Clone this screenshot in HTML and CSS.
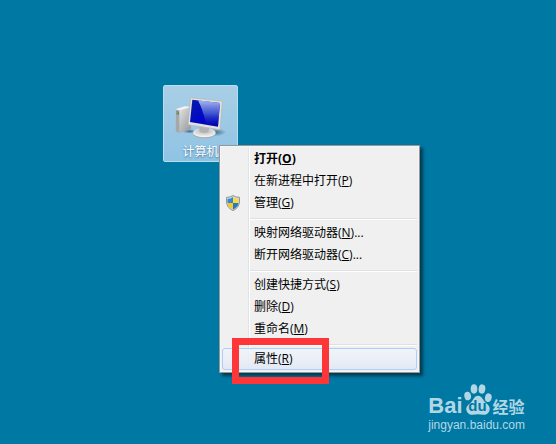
FILE: index.html
```html
<!DOCTYPE html>
<html lang="zh-CN">
<head>
    <meta charset="UTF-8">
    <meta name="viewport" content="width=device-width, initial-scale=1.0">
    <title>计算机</title>
    <link rel="stylesheet" href="styles.css">
</head>
<body>
    <main class="desktop">
        <button class="shortcut" type="button">
            <svg class="shortcut-icon" viewBox="2 0 180 150" aria-hidden="true">
                <defs>
                    <linearGradient id="screen" x1="0" y1="0" x2="1" y2="1">
                        <stop offset="0" stop-color="#0a1fa0"/>
                        <stop offset=".5" stop-color="#0008c8"/>
                        <stop offset="1" stop-color="#0000a8"/>
                    </linearGradient>
                    <linearGradient id="shine" x1="0" y1="0" x2="0" y2="1">
                        <stop offset="0" stop-color="#a8b8f0"/>
                        <stop offset=".5" stop-color="#5068d4" stop-opacity=".8"/>
                        <stop offset="1" stop-color="#1020c0" stop-opacity="0"/>
                    </linearGradient>
                    <linearGradient id="tower" x1="0" y1="0" x2="1" y2="1">
                        <stop offset="0" stop-color="#f0f0f0"/>
                        <stop offset="1" stop-color="#909498"/>
                    </linearGradient>
                    <radialGradient id="foot" cx=".5" cy=".3" r=".6">
                        <stop offset="0" stop-color="#b4b4b8"/>
                        <stop offset="1" stop-color="#f0f0f0"/>
                    </radialGradient>
                    <radialGradient id="shade">
                        <stop offset="0" stop-color="#34566c" stop-opacity=".8"/>
                        <stop offset="1" stop-color="#34566c" stop-opacity="0"/>
                    </radialGradient>
                </defs>
                <ellipse cx="134" cy="121" rx="34" ry="12" fill="url(#shade)"/>
                <ellipse cx="58" cy="118" rx="22" ry="7" fill="url(#shade)"/>
                <path d="M16 52 44 43 62 45V110L28 123 16 118Z" fill="url(#tower)"/>
                <path d="M16 52 27 55V123L16 118Z" fill="#a4a8ac"/>
                <path d="M19 58 25 60V68L19 66Z" fill="#54585c"/>
                <path d="M19 62 24 63" stroke="#7ee05c" stroke-width="3"/>
                <path d="M16 52 44 43 62 45 27 55Z" fill="#f4f4f4"/>
                <ellipse cx="102" cy="125" rx="34" ry="14" fill="#a4a8ac"/>
                <ellipse cx="102" cy="122" rx="34" ry="14" fill="url(#foot)"/>
                <path d="M86 98 118 102 114 121Q100 126 88 119Z" fill="#b0b2b4"/>
                <path d="M61 17 156 28 149 113 53 98Z" fill="#e4e2de" stroke="#b4b4b4" stroke-width="2"/>
                <path d="M66 23 149 33 143 104 59 90Z" fill="url(#screen)"/>
                <path d="M83 25 149 33 146 68 143 104 108 98Q98 55 83 25Z" fill="url(#shine)"/>
            </svg>
            <span class="shortcut-label">计算机</span>
        </button>

        <div class="menu" role="menu">
            <button class="item default" type="button" role="menuitem">打开(<u>O</u>)</button>
            <button class="item" type="button" role="menuitem">在新进程中打开(<u>P</u>)</button>
            <button class="item" type="button" role="menuitem">
                <svg class="shield" viewBox="0 0 16 16" aria-hidden="true">
                    <path d="M8 .5Q11 2.500 14.500 2.300V7Q14 13 8 15.600 2 13 1.500 7V2.300Q5 2.500 8 .5Z" fill="#d4d8da" stroke="#92989c"/>
                    <path d="M8 2V8H2.500V4Q6 4 8 2Z" fill="#2d8bd8"/>
                    <path d="M8 2Q10 4 13.500 4V8H8Z" fill="#ffd83c"/>
                    <path d="M2.500 8H8V14.500Q3 12 2.500 8Z" fill="#fcc820"/>
                    <path d="M8 8H13.500Q13 12 8 14.500Z" fill="#247cc8"/>
                </svg>
                管理(<u>G</u>)
            </button>
            <hr class="separator">
            <button class="item" type="button" role="menuitem">映射网络驱动器(<u>N</u>)...</button>
            <button class="item" type="button" role="menuitem">断开网络驱动器(<u>C</u>)...</button>
            <hr class="separator">
            <button class="item" type="button" role="menuitem">创建快捷方式(<u>S</u>)</button>
            <button class="item" type="button" role="menuitem">删除(<u>D</u>)</button>
            <button class="item" type="button" role="menuitem">重命名(<u>M</u>)</button>
            <hr class="separator">
            <button class="item active" type="button" role="menuitem">属性(<u>R</u>)</button>
        </div>

        <div class="marker"></div>

        <div class="watermark">
            <div class="brand">
                <span class="brand-bai">Bai</span>
                <span class="paw">
                    <svg class="paw-shape" viewBox="0 0 84 96" aria-hidden="true">
                        <ellipse cx="11" cy="36" rx="10" ry="13" transform="rotate(-12 11 36)"/>
                        <ellipse cx="30" cy="15" rx="10" ry="14"/>
                        <ellipse cx="54" cy="15" rx="10" ry="14" transform="rotate(8 54 15)"/>
                        <ellipse cx="73" cy="41" rx="10" ry="13" transform="rotate(12 73 41)"/>
                        <path d="M42 35C54 35 56 48 65 56C74 63 80 70 76 81C71 95 58 93 42 91C26 93 13 95 8 81C4 70 11 63 20 56C29 48 30 35 42 35Z"/>
                    </svg>
                    <span class="paw-text">du</span>
                </span>
                <span class="brand-name">经验</span>
            </div>
            <div class="site">jingyan.baidu.com</div>
        </div>
    </main>
</body>
</html>
```

FILE: styles.css
```css
*{
    margin: 0;
    padding: 0;
    box-sizing: border-box;
}
body{
    font-family: "Open Sans", "Noto Sans CJK SC", sans-serif;
    font-size: 12px;
    color: #000;
}
button{
    font: inherit;
    color: inherit;
    border: 1px solid transparent;
    background: none;
}
.desktop{
    position: relative;
    min-height: 100vh;
    overflow: hidden;
    background-color: #0078a4;
}

/* desktop shortcut */
.shortcut{
    position: absolute;
    left: 163px;
    top: 85px;
    width: 75px;
    padding: 6px 0 0;
    display: flex;
    flex-direction: column;
    align-items: center;
    border-color: #b9dcef;
    border-radius: 2px;
    background: linear-gradient(#a9cfe6, #8fc3e4);
}
.shortcut-icon{
    width: 60px;
    height: 50px;
}
.shortcut-label{
    line-height: 19px;
    color: #fff;
    text-shadow: 0 1px 2px #3f7390;
}

/* context menu */
.menu{
    position: absolute;
    left: 219px;
    top: 145px;
    width: 201px;
    padding: 2px;
    border: 1px solid #979797;
    background: linear-gradient(90deg, #e2e3e3 1px, #fff 1px) 28px 2px / 2px calc(100% - 4px) no-repeat #f0f0f0;
    box-shadow: inset 0 0 0 1px #f5f5f5, 3px 3px 3px rgba(0, 0, 0, .5);
}
.item{
    position: relative;
    display: block;
    width: 100%;
    height: 22px;
    padding-left: 31px;
    line-height: 20px;
    text-align: left;
    border-radius: 3px;
}
.item u{
    text-underline-offset: 1px;
}
.default{
    font-weight: bold;
}
.active{
    border-color: #aecff7;
    background: linear-gradient(rgba(241, 244, 250, .8), rgba(224, 232, 246, .8));
}
.shield{
    position: absolute;
    left: 2px;
    top: 2px;
    width: 16px;
    height: 16px;
}
.separator{
    height: 2px;
    margin: 4px 0 2px 28px;
    border: solid;
    border-width: 1px 0;
    border-color: #e0e0e0 transparent #fff;
}

/* red frame round the chosen item */
.marker{
    position: absolute;
    left: 232px;
    top: 338px;
    width: 97px;
    height: 46px;
    border: 7px solid #fe3637;
}

.watermark{
    position: absolute;
    right: 31px;
    bottom: 12px;
    color: #b2d7e4;
}
.brand{
    display: flex;
    align-items: flex-end;
    gap: 1px;
}
.brand-bai{
    font: bold 22px/24px "Liberation Sans", sans-serif;
}
.paw{
    position: relative;
    width: 28px;
    height: 34px;
}
.paw-shape{
    display: block;
    width: 28px;
    height: 32px;
    fill: #b2d7e4;
}
.paw-text{
    position: absolute;
    left: 0;
    right: 0;
    bottom: 4px;
    font: bold 15px/16px "Liberation Sans", sans-serif;
    text-align: center;
    color: #0078a4;
}
.brand-name{
    font-size: 16px;
    font-weight: bold;
    line-height: 22px;
}
.site{
    font: 12px/14px "Liberation Sans", sans-serif;
}
```
